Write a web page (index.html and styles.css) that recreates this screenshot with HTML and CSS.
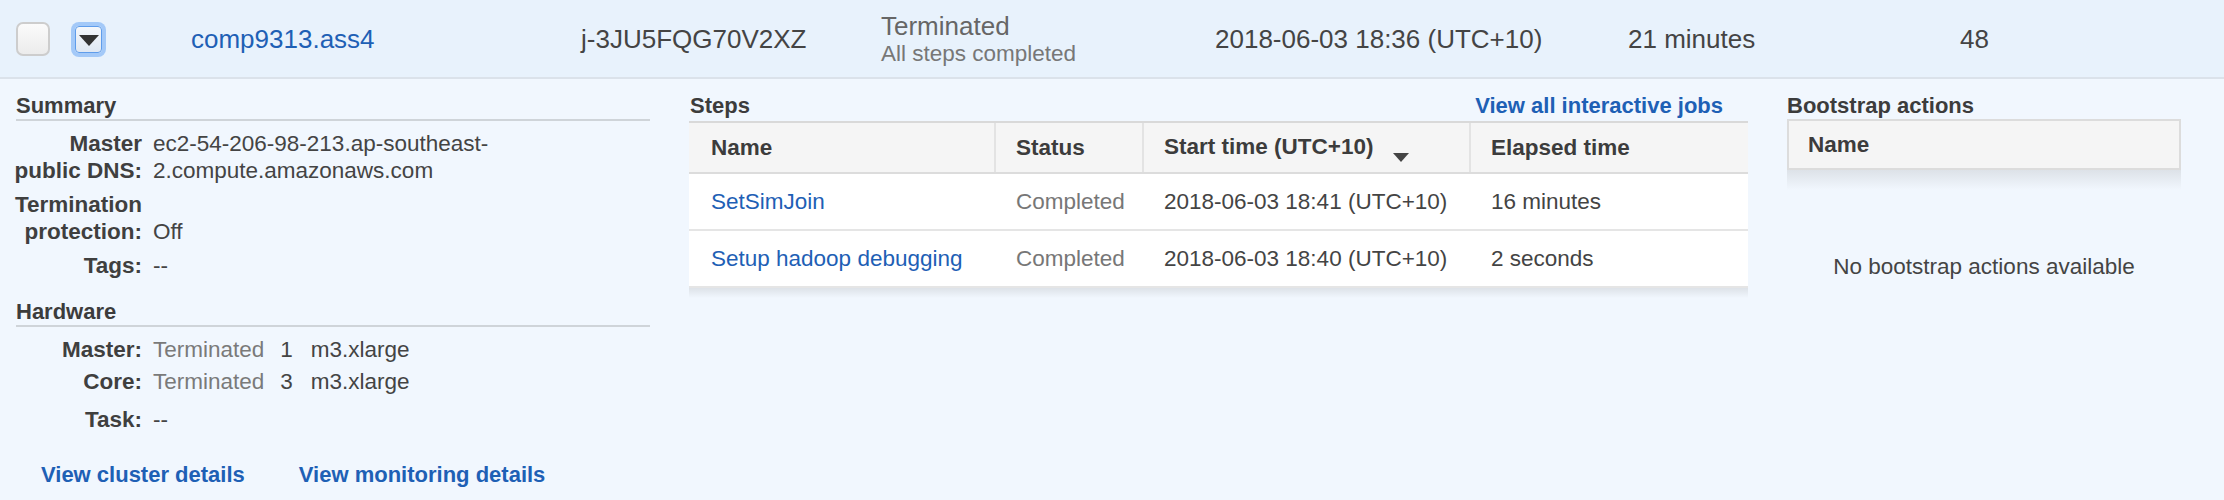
FILE: index.html
```html
<!DOCTYPE html>
<html>
<head>
<meta charset="utf-8">
<link rel="stylesheet" href="styles.css">
</head>
<body>
<div class="cluster-row">
  <span class="checkbox"></span>
  <span class="expander"><span class="caret"></span></span>
  <a class="cell cell-name link">comp9313.ass4</a>
  <span class="cell cell-id">j-3JU5FQG70V2XZ</span>
  <span class="cell cell-status">
    <span class="status-main">Terminated</span>
    <span class="status-sub">All steps completed</span>
  </span>
  <span class="cell cell-date">2018-06-03 18:36 (UTC+10)</span>
  <span class="cell cell-elapsed">21 minutes</span>
  <span class="cell cell-hours">48</span>
</div>

<div class="details">
  <section class="col-summary">
    <h3 class="section-title ruled">Summary</h3>
    <dl class="props">
      <div class="prop"><dt>Master<br>public DNS:</dt><dd>ec2-54-206-98-213.ap-southeast-<wbr>2.compute.amazonaws.com</dd></div>
      <div class="prop"><dt>Termination<br>protection:</dt><dd class="bottom">Off</dd></div>
      <div class="prop"><dt>Tags:</dt><dd>--</dd></div>
    </dl>
    <h3 class="section-title ruled hw-title">Hardware</h3>
    <dl class="props hw">
      <div class="prop"><dt>Master:</dt><dd><span class="muted">Terminated</span><span class="count">1</span><span>m3.xlarge</span></dd></div>
      <div class="prop"><dt>Core:</dt><dd><span class="muted">Terminated</span><span class="count">3</span><span>m3.xlarge</span></dd></div>
      <div class="prop task"><dt>Task:</dt><dd>--</dd></div>
    </dl>
    <div class="links">
      <a class="link strong">View cluster details</a>
      <a class="link strong">View monitoring details</a>
    </div>
  </section>

  <section class="col-steps">
    <div class="steps-head">
      <h3 class="section-title">Steps</h3>
      <a class="link strong">View all interactive jobs</a>
    </div>
    <table class="steps">
      <colgroup>
        <col class="w-name"><col class="w-status"><col class="w-start"><col class="w-elapsed">
      </colgroup>
      <thead>
        <tr>
          <th>Name</th>
          <th class="sep">Status</th>
          <th class="sep">Start time (UTC+10)<span class="sort"></span></th>
          <th class="sep">Elapsed time</th>
        </tr>
      </thead>
      <tbody>
        <tr>
          <td><a class="link">SetSimJoin</a></td>
          <td class="muted">Completed</td>
          <td>2018-06-03 18:41 (UTC+10)</td>
          <td>16 minutes</td>
        </tr>
        <tr>
          <td><a class="link">Setup hadoop debugging</a></td>
          <td class="muted">Completed</td>
          <td>2018-06-03 18:40 (UTC+10)</td>
          <td>2 seconds</td>
        </tr>
      </tbody>
    </table>
    <div class="table-shadow short"></div>
  </section>

  <section class="col-bootstrap">
    <h3 class="section-title">Bootstrap actions</h3>
    <div class="bs-header">Name</div>
    <div class="table-shadow"></div>
    <p class="empty">No bootstrap actions available</p>
  </section>
</div>
</body>
</html>
```

FILE: styles.css
```css
* { box-sizing: border-box; }
html, body {
  margin: 0;
  padding: 0;
}
body {
  width: 2224px;
  height: 500px;
  overflow: hidden;
  background: #f1f7fe;
  font-family: "Liberation Sans", Arial, Helvetica, sans-serif;
  color: #444;
}
a { text-decoration: none; }
.link { color: #1e60b5; cursor: pointer; }
.strong { font-weight: bold; font-size: 22px; }

/* top row */
.cluster-row {
  display: flex;
  align-items: center;
  height: 79px;
  padding-left: 16px;
  background: #e8f2fc;
  border-bottom: 2px solid #dbe2ea;
  font-size: 26px;
}
.checkbox {
  width: 34px;
  height: 34px;
  border: 2px solid #cdcdcd;
  border-radius: 7px;
  background: linear-gradient(#fbfbfb, #ececec);
  margin-right: 25px;
  flex: none;
}
.expander {
  width: 27px;
  height: 27px;
  margin-top: 2px;
  margin-right: 89px;
  border: 1px solid #5f9deb;
  border-radius: 4px;
  background: linear-gradient(#f4f7fb, #dfe8f3);
  box-shadow: 0 0 0 4px #a3c9f8;
  display: flex;
  align-items: center;
  justify-content: center;
  flex: none;
}
.caret {
  width: 0;
  height: 0;
  border-left: 10px solid transparent;
  border-right: 10px solid transparent;
  border-top: 11px solid #333;
  margin-top: 2px;
}
.cell { flex: none; line-height: 30px; }
.cell-name { width: 390px; }
.cell-id { width: 300px; color: #444; }
.cell-status { width: 334px; display: flex; flex-direction: column; }
.status-main { color: #666; line-height: 30px; }
.status-sub { color: #777; font-size: 22.5px; line-height: 26px; }
.cell-date { width: 413px; }
.cell-elapsed { width: 332px; }

/* details */
.details {
  display: flex;
  padding: 13px 0 0 16px;
}
.section-title {
  margin: 0;
  font-size: 22px;
  line-height: 27px;
  font-weight: bold;
  color: #3c3c3c;
}
.ruled { border-bottom: 2px solid #cfd4d9; }

.col-summary { width: 634px; margin-right: 39px; flex: none; }
.props {
  margin: 9px 0 0 -16px;
  display: flex;
  flex-direction: column;
  gap: 7px;
  font-size: 22.5px;
  line-height: 27px;
}
.prop {
  display: grid;
  grid-template-columns: 142px 1fr;
  column-gap: 11px;
}
.prop dt {
  font-weight: bold;
  text-align: right;
  white-space: nowrap;
  color: #3f3f3f;
}
.prop dd { margin: 0; color: #444; }
.prop dd.bottom { align-self: end; }
.muted { color: #7a7a7a; }
.count { margin: 0 18px 0 16px; }
.hw-title { margin-top: 19px; }
.hw { gap: 5px; }
.hw .task { margin-top: 6px; }
.links {
  display: flex;
  gap: 54px;
  padding-left: 25px;
  margin-top: 28px;
  line-height: 27px;
}

.col-steps { width: 1059px; margin-right: 39px; flex: none; }
.steps-head {
  display: flex;
  justify-content: space-between;
  align-items: center;
  height: 27px;
  padding: 0 25px 0 1px;
}
table.steps {
  margin-top: 2px;
  width: 100%;
  border-collapse: collapse;
  table-layout: fixed;
  font-size: 22.5px;
}
.w-name { width: 306px; }
.w-status { width: 148px; }
.w-start { width: 327px; }
.w-elapsed { width: 278px; }
.steps th {
  height: 51px;
  background: #f5f5f5;
  border-top: 2px solid #d9d9d9;
  border-bottom: 2px solid #dcdcdc;
  text-align: left;
  padding: 0 0 0 22px;
  font-weight: bold;
  color: #3c3c3c;
}
.steps th.sep {
  border-left: 2px solid #e3e3e3;
  padding-left: 20px;
}
.sort {
  display: inline-block;
  width: 0;
  height: 0;
  border-left: 8px solid transparent;
  border-right: 8px solid transparent;
  border-top: 9px solid #444;
  margin-left: 20px;
  vertical-align: -8px;
}
.steps td {
  height: 57px;
  background: #fff;
  border-bottom: 2px solid #e5e5e5;
  padding: 0 0 0 22px;
  color: #444;
}
.steps td + td { padding-left: 21px; }
.steps td.muted { color: #777; }
.table-shadow {
  height: 20px;
  background: linear-gradient(#dde2e8, rgba(241, 247, 254, 0));
}
.table-shadow.short { height: 10px; }

.col-bootstrap { width: 394px; flex: none; }
.bs-header {
  height: 51px;
  background: #f5f5f5;
  border: 2px solid #dcdcdc;
  padding-left: 19px;
  display: flex;
  align-items: center;
  font-size: 22.5px;
  font-weight: bold;
  color: #3c3c3c;
}
.empty {
  margin: 63px 0 0;
  text-align: center;
  font-size: 22.5px;
  line-height: 27px;
  color: #444;
}
```
